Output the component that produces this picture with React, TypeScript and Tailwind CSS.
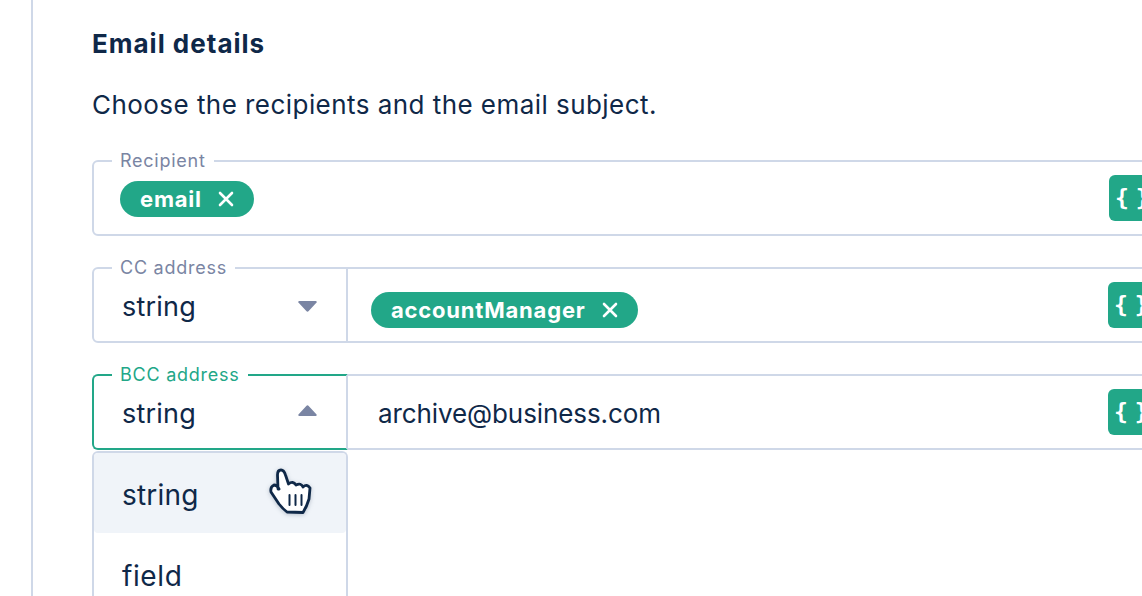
import React from "react";

const Chip = ({ text }: { text: string }) => (
  <span className="inline-flex h-9 items-center gap-4 rounded-full bg-[#22a788] pl-[20px] pr-[20px] text-[22px] font-bold leading-none tracking-[0.8px] text-white">
    {text}
    <svg width="16" height="16" viewBox="0 0 16 16" fill="none" stroke="white" strokeWidth="2.6" strokeLinecap="round">
      <path d="M2 2l12 12M14 2L2 14" />
    </svg>
  </span>
);

const VarButton = () => (
  <div className="flex h-[46px] w-[60px] shrink-0 items-center whitespace-pre rounded-l-md bg-[#22a788] pl-[6px] text-[23px] font-bold leading-none tracking-[-3.5px] text-white [font-family:'DejaVu_Sans_Mono',monospace]">
    {"{ }"}
  </div>
);

const Legend = ({ text, active }: { text: string; active?: boolean }) => (
  <span
    className={`absolute left-[18px] top-[-11px] bg-white px-2 text-[18px] leading-[20px] tracking-[0.75px] ${
      active ? "text-[#22a788]" : "text-[#7a85a3]"
    }`}
  >
    {text}
  </span>
);

const Caret = ({ up }: { up?: boolean }) => (
  <svg width="19" height="11" viewBox="0 0 19 11" fill="#7a85a3" className={up ? "-mt-[3px]" : "mt-[3px] rotate-180"}>
    <path d="M8.3 1a1.5 1.5 0 0 1 2.4 0l7.4 8a1.1 1.1 0 0 1-.9 2H1.8a1.1 1.1 0 0 1-.9-2z" />
  </svg>
);

const SelectPart = ({ label, up, active }: { label: string; up?: boolean; active?: boolean }) => (
  <div
    className={`relative flex h-[76px] w-[256px] shrink-0 items-center justify-between rounded-l-md border-2 pl-[28px] pr-[29px] ${
      active ? "border-[#22a788] border-r-[#cfd8e8]" : "border-[#cfd8e8]"
    }`}
  >
    <Legend text={label} active={active} />
    <span className="mt-[5px] text-[27px] tracking-[0.2px] text-[#0f2848]">string</span>
    <Caret up={up} />
  </div>
);

const App: React.FC = () => {
  return (
    <div className="h-[596px] w-[1142px] overflow-hidden bg-white font-['Inter',sans-serif]">
      <div className="ml-[31px] h-full border-l-2 border-[#cfd8e8] pl-[59px] pt-[27px]">
        <h2 className="text-[26px] font-bold leading-[34px] tracking-[1px] text-[#0f2848]">Email details</h2>
        <p className="mt-[27px] text-[26px] leading-[34px] tracking-[0.45px] text-[#0f2848]">
          Choose the recipients and the email subject.
        </p>

        {/* Recipient */}
        <div className="relative mt-[38px] flex h-[76px] w-[1100px] items-center justify-between rounded-md border-2 border-[#cfd8e8] pl-[26px]">
          <Legend text="Recipient" />
          <div className="mt-[2px]">
            <Chip text="email" />
          </div>
          <div className="mr-[21px]">
            <VarButton />
          </div>
        </div>

        {/* CC */}
        <div className="mt-[31px] flex w-[1100px]">
          <SelectPart label="CC address" />
          <div className="flex h-[76px] flex-1 items-center justify-between border-y-2 border-[#cfd8e8] pl-[23px]">
            <div className="mt-[10px]">
              <Chip text="accountManager" />
            </div>
            <div className="mr-[24px]">
              <VarButton />
            </div>
          </div>
        </div>

        {/* BCC */}
        <div className="mt-[31px] flex w-[1100px]">
          <SelectPart label="BCC address" up active />
          <div className="flex h-[76px] flex-1 items-center justify-between border-y-2 border-[#cfd8e8] pl-[30px]">
            <span className="mt-[3px] text-[26px] tracking-[-0.1px] text-[#0f2848]">archive@business.com</span>
            <div className="mr-[24px]">
              <VarButton />
            </div>
          </div>
        </div>

        {/* Dropdown */}
        <div className="mt-px w-[256px] rounded-t-md border-2 border-b-0 border-[#cfd8e8] text-[28px] tracking-[0.2px] text-[#0f2848]">
          <div className="relative flex h-[80px] items-center rounded-[4px] bg-[#f0f4f9] pl-[28px]">
            <span className="mt-[3px]">string</span>
            <svg
              className="absolute left-[156px] top-[2px] drop-shadow-[0_1px_2px_rgba(15,40,72,0.25)]"
              width="80"
              height="70"
              viewBox="0 0 80 70"
              fill="white"
              stroke="#0f2848"
              strokeWidth="2.8"
              strokeLinejoin="round"
              strokeLinecap="round"
            >
              <path d="M28 34 L27.5 20 Q27.5 15 31 15 Q34 15 35.5 20 L38.5 29 Q43 25.5 46 30 Q51 27.5 53 32 Q57 28.5 60 33 L59 44 Q57 51 53 57.5 L37 57 Q33 54 29 49 L21 37 Q20 32 24 30 Q27 30 29 34 Z" />
              <path d="M39.5 40v10M45.5 40v10M51.5 40v10" fill="none" strokeWidth="2" />
            </svg>
          </div>
          <div className="flex h-[84px] items-center pl-[28px] pt-[2px] tracking-[0.6px]">field</div>
        </div>
      </div>
    </div>
  );
};

export default App;
